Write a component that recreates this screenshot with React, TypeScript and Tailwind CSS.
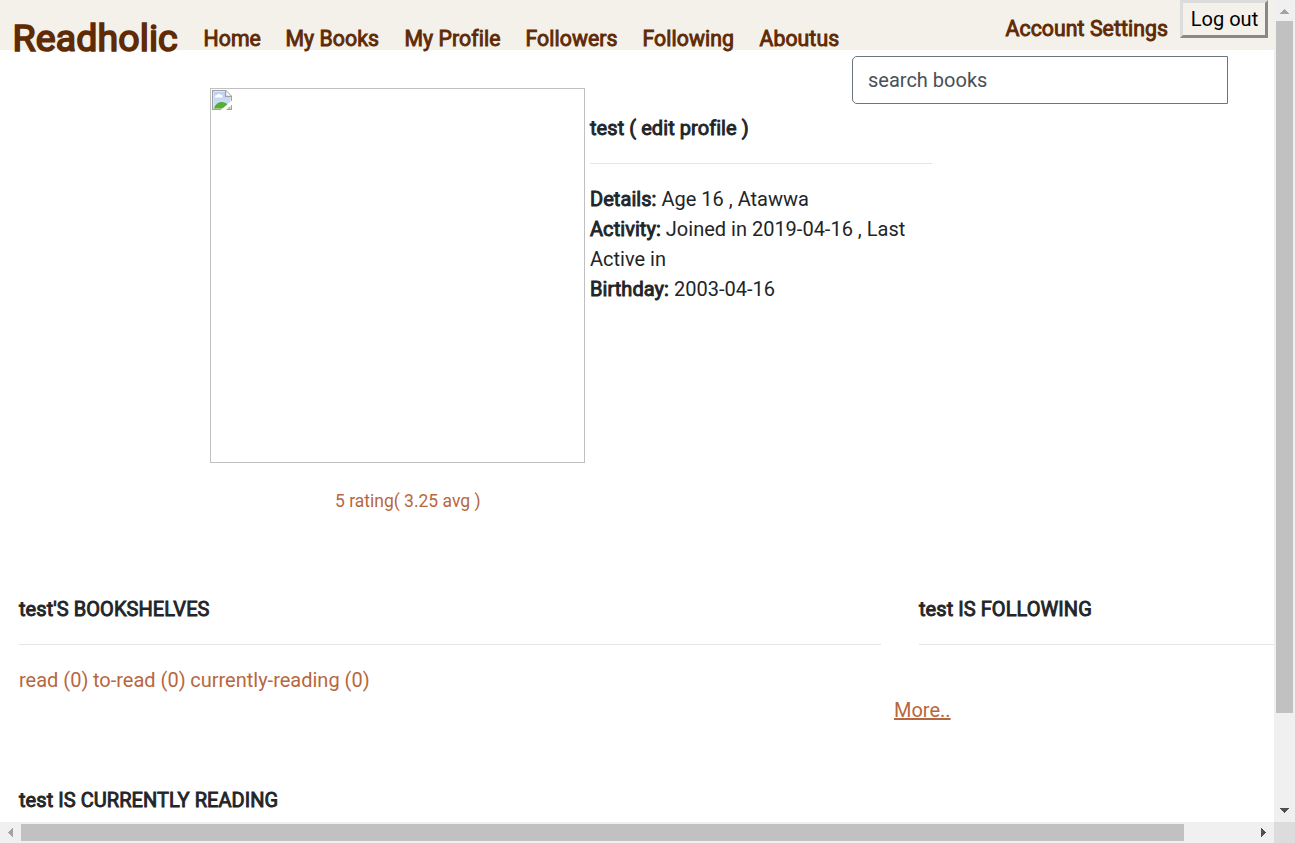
import type { ReactNode } from "react";

const links = [
  { label: "Home", width: "w-[82px]" },
  { label: "My Books", width: "w-[119px]" },
  { label: "My Profile", width: "w-[121px]" },
  { label: "Followers", width: "w-[117px]" },
  { label: "Following", width: "w-[117px]" },
  { label: "Aboutus", width: "w-[80px]" },
];

const shelves = ["read (0)", "to-read (0)", "currently-reading (0)"];

function Heavy({ children }: { children: ReactNode }) {
  return (
    <strong className="font-normal tracking-[0.06px] [-webkit-text-stroke:0.9px_currentColor]">{children}</strong>
  );
}

function Header() {
  return (
    <header className="flex h-[50px] items-start bg-[#f4f1ea] text-[#5f2a04]">
      <a className="mt-[8px] ml-[12.5px] w-[191px] text-[37.5px] leading-[60px]">
        <span className="tracking-[0.1px] [-webkit-text-stroke:1.7px_currentColor]">Readholic</span>
      </a>
      <nav className="mt-[24px] flex text-[21.25px] leading-[30px] whitespace-nowrap">
        {links.map((link) => (
          <a key={link.label} className={link.width}>
            <Heavy>{link.label}</Heavy>
          </a>
        ))}
      </nav>
      <div className="mr-[6px] ml-auto flex items-start gap-[12px] whitespace-nowrap">
        <a className="mt-[14px] text-[21.25px] leading-[30px]">
          <Heavy>Account Settings</Heavy>
        </a>
        <button className="h-[38px] w-[88px] border-[3px] border-t-[#dcdcdc] border-r-[#888888] border-b-[#888888] border-l-[#dcdcdc] pl-px leading-[30px] text-black">
          Log out
        </button>
      </div>
    </header>
  );
}

function MissingPhoto() {
  return (
    <div className="h-[375px] w-[375px] border border-[#c0c0c0] p-px">
      <svg width="20" height="20" viewBox="0 0 20 20">
        <defs>
          <linearGradient id="sky" x1="0" y1="0" x2="0" y2="1">
            <stop offset="0" stopColor="#bcd0f5" />
            <stop offset="1" stopColor="#d3e0fa" />
          </linearGradient>
        </defs>
        <path d="M0 0H14L20 6V20H0Z" fill="#a0a0a0" />
        <path d="M1.3 1.3H13L18.7 7V18.7H1.3Z" fill="#fff" />
        <path d="M2 2H13V7H18V18H2Z" fill="url(#sky)" />
        <path d="M3 7.5A1.8 1.8 0 0 1 5 5A2.3 2.3 0 0 1 8.4 4.6A1.7 1.7 0 0 1 10 7.5Z" fill="#fff" />
        <path d="M2 18.5C3 14.5 6.5 11.8 10 12C14 12.3 17 15 18 18.5Z" fill="#56ad35" />
        <path d="M13.6 0.6V6.4H19.4" fill="#fff" stroke="#a0a0a0" strokeWidth="1.3" />
        <path d="M8.6 20L20 10.4V14.8L14 20Z" fill="#fff" />
      </svg>
    </div>
  );
}

function Profile() {
  return (
    <section className="flex h-[530px] items-start pl-[210px]">
      <div className="mt-[38px] w-[375px]">
        <MissingPhoto />
        <p className="mt-[23px] pl-[125px] text-[17.5px] leading-[30px] text-[#b76740]">5 rating( 3.25 avg )</p>
      </div>
      <div className="mt-[63px] ml-[5px] w-[342px] leading-[30px]">
        <h1>
          <Heavy>test ( edit profile )</Heavy>
        </h1>
        <hr className="mt-[20px] mb-[20px] border-[#e5e5e5]" />
        <p>
          <Heavy>Details:</Heavy> Age 16 , Atawwa
        </p>
        <p>
          <Heavy>Activity:</Heavy> Joined in 2019-04-16 , Last
          <br />
          Active in
        </p>
        <p>
          <Heavy>Birthday:</Heavy> 2003-04-16
        </p>
      </div>
      <input
        placeholder="search books"
        className="mt-[6px] -ml-[80px] h-[48px] w-[376px] rounded-l-[5px] border border-[#6c757d] bg-white px-[15px] leading-[30px] placeholder:text-[#495057]"
      />
    </section>
  );
}

function Shelves() {
  return (
    <div className="flex items-start leading-[30px]">
      <section className="ml-[19px] w-[862px]">
        <h2 className="mt-[14px]">
          <Heavy>test&apos;S BOOKSHELVES</Heavy>
        </h2>
        <hr className="my-[20px] border-[#e5e5e5]" />
        <p className="flex gap-[4.6px] text-[#b76740]">
          {shelves.map((shelf) => (
            <a key={shelf}>{shelf}</a>
          ))}
        </p>
        <h2 className="mt-[90px]">
          <Heavy>test IS CURRENTLY READING</Heavy>
        </h2>
      </section>
      <section className="ml-[13px] w-[380px]">
        <h2 className="mt-[14px] pl-[25px]">
          <Heavy>test IS FOLLOWING</Heavy>
        </h2>
        <hr className="mt-[20px] ml-[25px] border-[#e5e5e5]" />
        <a className="mt-[50px] block text-[#b76740] underline">More..</a>
      </section>
    </div>
  );
}

function Arrow({ points, color }: { points: string; color: string }) {
  return (
    <svg width="21" height="21" viewBox="0 0 21 21" shapeRendering="crispEdges" className="shrink-0">
      <polygon points={points} fill={color} />
    </svg>
  );
}

export default function App() {
  return (
    <div className="grid h-[843px] w-[1295px] grid-cols-[1274px_21px] grid-rows-[822px_21px] overflow-hidden bg-white font-[Roboto,sans-serif] text-[20px] text-[#212529]">
      <main className="overflow-hidden">
        <Header />
        <Profile />
        <Shelves />
      </main>
      <div className="flex flex-col bg-[#f0f0f0]">
        <Arrow points="6,14 15,14 10.5,9" color="#a3a3a3" />
        <div className="ml-[2px] h-[692px] w-[17px] bg-[#c1c1c1]" />
        <div className="mt-auto h-[21px]">
          <Arrow points="6,7 15,7 10.5,12" color="#505050" />
        </div>
      </div>
      <div className="flex bg-[#f0f0f0]">
        <Arrow points="13,6 13,15 8,10.5" color="#a3a3a3" />
        <div className="mt-[2px] h-[17px] w-[1163px] bg-[#c1c1c1]" />
        <div className="ml-auto">
          <Arrow points="8,6 8,15 13,10.5" color="#505050" />
        </div>
      </div>
      <div className="bg-[#dcdcdc]" />
    </div>
  );
}
